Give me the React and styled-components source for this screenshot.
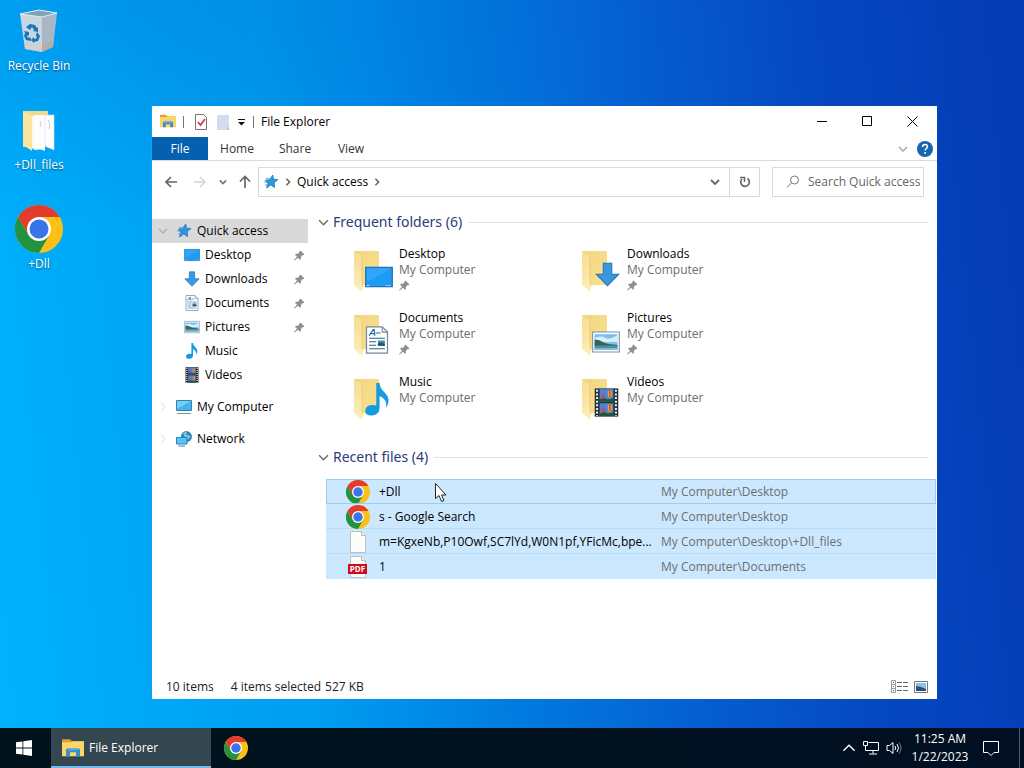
import React from 'react';
import styled, { createGlobalStyle } from 'styled-components';

const GlobalStyle = createGlobalStyle`
  * {
    box-sizing: border-box;
  }
  body {
    margin: 0;
    font-family: 'Open Sans', 'Noto Sans', sans-serif;
    font-size: 12px;
    line-height: 16px;
    color: #000;
  }
  button,
  input {
    font: inherit;
    color: inherit;
    border: 0;
    background: none;
    padding: 0;
  }
  a {
    color: inherit;
    text-decoration: none;
  }
  svg {
    display: block;
    flex: none;
  }
`;

const Screen = styled.div`
  position: relative;
  display: flex;
  flex-direction: column;
  min-height: 100vh;
  overflow: hidden;
  background:
    radial-gradient(ellipse 50% 30% at 15% 0%, rgba(0, 110, 205, 0.3), transparent),
    linear-gradient(
      84deg,
      #00b2fc 0%,
      #00a8f8 14%,
      #009cf0 30%,
      #007ce0 47%,
      #0562d2 62%,
      #0548c0 80%,
      #043ab4 100%
    );
`;

const DesktopIcons = styled.div`
  flex: 1;
  display: flex;
  flex-direction: column;
  align-items: flex-start;
  padding-top: 7px;
`;

const DesktopIcon = styled.button`
  display: flex;
  flex-direction: column;
  align-items: center;
  gap: 2px;
  width: 78px;
  height: 99px;
  color: #fff;
  line-height: 18px;
  text-shadow: 0 1px 2px rgba(0, 0, 0, 0.5);
`;

const ExplorerWindow = styled.main`
  position: absolute;
  top: 106px;
  right: 87px;
  bottom: 69px;
  left: 151px;
  display: flex;
  flex-direction: column;
  background: #fff;
  border-left: 1px solid #1a9fe0;
`;

const TitleBar = styled.header`
  display: flex;
  align-items: center;
  height: 31px;
  padding: 0 2px 0 8px;
`;

const QuickTools = styled.div`
  display: flex;
  align-items: center;
  gap: 7px;
  padding-right: 7px;
`;

const Divider = styled.span`
  width: 1px;
  height: 12px;
  background: #777;
`;

const WindowTitle = styled.h1`
  flex: 1;
  margin: 0;
  font-size: 12px;
  font-weight: 400;
`;

const CaptionButton = styled.button`
  display: flex;
  align-items: center;
  justify-content: center;
  width: 45px;
  height: 31px;
`;

const Ribbon = styled.nav`
  display: flex;
  align-items: center;
  height: 24px;
  border-bottom: 1px solid #dadbdc;
  padding-right: 4px;
`;

const RibbonTab = styled.button`
  height: 23px;
  width: ${(props) => props.$width || 58}px;
  color: ${(props) => (props.$active ? '#fff' : '#333')};
  background: ${(props) => (props.$active ? '#0560b0' : 'none')};
`;

const Spacer = styled.span`
  flex: 1;
`;

const HelpButton = styled.button`
  margin-left: 9px;
`;

const NavBar = styled.div`
  display: flex;
  align-items: center;
  height: 41px;
  padding-right: 13px;
`;

const HistoryButtons = styled.div`
  display: flex;
  align-items: center;
  justify-content: space-between;
  width: 106px;
  padding: 0 7px 0 13px;
`;

const AddressBar = styled.div`
  flex: 1;
  display: flex;
  align-items: center;
  gap: 5px;
  height: 30px;
  border: 1px solid #d9d9d9;
  padding-left: 4px;
`;

const HistoryDropdown = styled.button`
  padding: 0 4px;
`;

const RefreshButton = styled.button`
  display: flex;
  align-items: center;
  justify-content: center;
  width: 30px;
  height: 28px;
  border-left: 1px solid #d9d9d9;
`;

const SearchBox = styled.label`
  display: flex;
  align-items: center;
  gap: 8px;
  width: 152px;
  height: 30px;
  margin-left: 12px;
  border: 1px solid #d9d9d9;
  padding-left: 13px;
  input {
    flex: 1;
    min-width: 0;
    outline: 0;
  }
  input::placeholder {
    color: #666;
    opacity: 1;
  }
`;

const Body = styled.div`
  flex: 1;
  display: flex;
  min-height: 0;
`;

const Tree = styled.nav`
  width: 156px;
  padding-top: 17px;
`;

const TreeItem = styled.a`
  display: flex;
  align-items: center;
  gap: 5px;
  height: 24px;
  margin-top: ${(props) => (props.$spaced ? 8 : 0)}px;
  padding-left: ${(props) => (props.$child ? 32 : 6)}px;
  padding-right: 3px;
  background: ${(props) => (props.$selected ? '#d9d9d9' : 'none')};
  svg:first-child {
    margin-right: ${(props) => (props.$child ? 0 : 3)}px;
  }
`;

const Content = styled.section`
  flex: 1;
  min-width: 0;
  padding: 9px 1px 0 10px;
`;

const GroupHeader = styled.h2`
  display: flex;
  align-items: center;
  gap: 4px;
  height: 22px;
  margin: 0;
  padding-right: 7px;
  font-family: 'Noto Sans', 'Open Sans', sans-serif;
  font-size: 14px;
  font-weight: 400;
  color: #2c3a7c;
  &:after {
    flex: 1;
    height: 1px;
    margin-left: 2px;
    background: #e2e2e2;
    content: '';
  }
`;

const FolderGrid = styled.div`
  display: grid;
  grid-template-columns: repeat(auto-fill, 228px);
  grid-auto-rows: 64px;
  max-width: 600px;
  padding: 13px 0 8px 33px;
`;

const FolderTile = styled.a`
  display: flex;
  align-items: flex-start;
  gap: 6px;
`;

const FolderText = styled.div`
  display: flex;
  flex-direction: column;
  svg {
    margin-top: 2px;
  }
`;

const Muted = styled.span`
  color: #6d6d6d;
`;

const FileTable = styled.table`
  width: calc(100% - 8px);
  margin: 11px 0 0 8px;
  border-collapse: collapse;
  table-layout: fixed;
  background: #cce8ff;
`;

const FileRow = styled.tr`
  height: 25px;
  outline: ${(props) => (props.$focused ? '1px solid #99cdf0' : 'none')};
  outline-offset: -1px;
  td {
    padding: 0;
    box-shadow: inset 0 -1px #b9dcf5;
  }
  &:last-child td {
    box-shadow: none;
  }
  td:first-child {
    width: 335px;
  }
`;

const FileName = styled.div`
  display: flex;
  align-items: center;
  gap: 9px;
  height: 25px;
  padding-left: 20px;
  white-space: nowrap;
`;

const StatusBar = styled.footer`
  display: flex;
  align-items: center;
  height: 25px;
  padding: 0 9px 0 14px;
  color: #222;
`;

const StatusText = styled.span`
  margin-right: ${(props) => props.$gap || 0}px;
`;

const ViewButton = styled.button`
  margin-left: 6px;
`;

const Taskbar = styled.footer`
  display: flex;
  align-items: center;
  height: 40px;
  color: #fff;
  background: linear-gradient(90deg, #00131c, #010f22);
`;

const StartButton = styled.button`
  display: flex;
  justify-content: center;
  width: 51px;
  padding-right: 3px;
`;

const TaskButton = styled.button`
  display: flex;
  align-items: center;
  gap: 5px;
  width: 160px;
  height: 40px;
  padding-left: 11px;
  background: #34464f;
  box-shadow: inset 0 -2px #76b9ed;
`;

const PinnedApp = styled.button`
  margin-left: 13px;
`;

const Tray = styled.div`
  display: flex;
  align-items: center;
  gap: 7px;
  margin-left: auto;
  height: 40px;
`;

const Clock = styled.time`
  width: 62px;
  line-height: 18px;
  text-align: center;
`;

const ShowDesktop = styled.button`
  width: 5px;
  height: 40px;
  margin-left: 8px;
  border-left: 1px solid #4c5866;
`;

const MousePointer = styled.svg`
  position: absolute;
  left: 434px;
  top: 482px;
`;

const Chevron = ({ dir = 'down', size = 10, color = '#666', width = 1.2 }) => {
  const paths = {
    down: 'M1 3l4 4 4-4',
    right: 'M3 1l4 4-4 4',
    up: 'M1 7l4-4 4 4',
  };
  return (
    <svg width={size} height={size} viewBox="0 0 10 10" aria-hidden="true">
      <path d={paths[dir]} fill="none" stroke={color} strokeWidth={width} />
    </svg>
  );
};

const Chrome = ({ size }) => (
  <svg width={size} height={size} viewBox="0 0 48 48" aria-hidden="true">
    <circle cx="24" cy="24" r="24" fill="#fbc116" />
    <path d="M24 24L13.6 30 3.2 12A24 24 0 0 0 24 48L34.4 30z" fill="#229342" />
    <path d="M3.2 12A24 24 0 0 1 44.8 12H24L13.6 30z" fill="#e33b2e" />
    <circle cx="24" cy="24" r="12" fill="#fff" />
    <circle cx="24" cy="24" r="9.5" fill="#3b73e8" />
  </svg>
);

const Star = () => (
  <svg width="16" height="16" viewBox="0 0 16 16" aria-hidden="true">
    <path
      d="M9.8 1l.6 4.2 4.6.4-3.8 3 .4 5-3.8-2.6L3.6 14l1.400-5L2.2 6.400l4.300-.8z"
      fill="#2f98dd"
      stroke="#1b79b9"
      strokeWidth=".8"
    />
    <path d="M3 4.5h3M1 8h3M2 11h2" stroke="#3c9ad6" strokeWidth=".8" />
  </svg>
);

const Pin = () => (
  <svg width="11" height="11" viewBox="0 0 11 11" aria-hidden="true">
    <path
      d="M6.5.5l4 4-1 .8-.8-.2-1.8 1.8.1 2-1 .8L4 7.7.7 10.5 0 10l3-3.3-2-2 .8-1 2 .1 1.8-1.8-.1-.8z"
      fill="#8c9196"
    />
  </svg>
);

const ExplorerLogo = ({ width = 16 }) => (
  <svg width={width} height={width * 0.88} viewBox="0 0 22 19" aria-hidden="true">
    <path d="M0 1h8l2 2h11v4H0z" fill="#dca22d" />
    <path d="M0 4h9l2-1h11v15H0z" fill="#fbd66b" />
    <path d="M4 18v-7l2-1h10l2 1v7h-4v-4H8v4z" fill="#3c8ec7" />
    <path d="M6 10h10v2H6z" fill="#63b0e2" />
  </svg>
);

// small glyphs, drawn on a 16px grid, shared by the tree and the folder tiles
const glyphs = {
  desktop: (
    <>
      <path d="M.4 2.4h15.2v11.2H.4z" fill="#1d9bf6" stroke="#1565a5" strokeWidth=".6" />
      <path d="M1 3h14L1 11z" fill="#43b0ff" opacity=".5" />
      <path d="M1 12.8h1.5M12 12.8h.8M13.5 12.8h1" stroke="#bce3ff" strokeWidth=".6" />
    </>
  ),
  downloads: (
    <path d="M5.3.8h5.4v7h4.5L8 15.2.8 7.8h4.5z" fill="#3999df" stroke="#2275b8" strokeWidth=".7" />
  ),
  documents: (
    <>
      <path d="M2 .5h9l3 3v12H2z" fill="#fff" stroke="#73889a" strokeWidth=".7" />
      <path d="M11 .5v3h3" fill="none" stroke="#73889a" strokeWidth=".6" />
      <path d="M3.5 5.5l2.4-3.5h.5l.4 3.5M4.6 4.3h2" fill="none" stroke="#1472a8" strokeWidth=".7" />
      <path d="M7.5 4h2.5M3.5 7h9M3.5 9h4M3.5 11h4M3.5 13h9" stroke="#26668e" strokeWidth=".6" />
      <path d="M8.5 8.3h4v3h-4z" fill="#388bb5" />
      <path d="M8.5 10l2-.5 2 .8v1h-4z" fill="#2d4f63" />
    </>
  ),
  pictures: (
    <>
      <path d="M.4 2.3h15.2v11.4H.4z" fill="#fff" stroke="#7290a6" strokeWidth=".6" />
      <path d="M1.5 3.5h13v9h-13z" fill="#7cc0ee" />
      <path d="M1.5 6q3-2 6-.5t7-1.5v4h-13z" fill="#d7effb" />
      <path d="M1.5 6.5q3 .2 5 1.600t8 1.400V10.500H1.5z" fill="#326459" />
      <path d="M1.5 10h13v2.5h-13z" fill="#4d8fab" />
      <path d="M1.5 11.5h13v1h-13z" fill="#8ac4d6" />
    </>
  ),
  music: (
    <path
      d="M7.4 0H9q0 2.4 2.5 4.6Q15 8 12 12.3q1.3-4.2-3-6v6q-.2 3.2-3.4 3.5Q2 16 2 13.5q.3-3 4-2.8l1.4.2z"
      fill="#169be2"
    />
  ),
  videos: (
    <>
      <path d="M1.5.2h13v15.6h-13z" fill="#2c2e36" />
      <path d="M4.2.6h7.6v7H4.2z" fill="#4a83dc" />
      <path d="M4.2 8.4h7.6v7H4.2z" fill="#4a83dc" />
      <path d="M4.2 6.2l2.5-.7 2 .8 3-.6v1.9H4.2zM4.2 14l2.5-.7 2 .8 3-.6v1.9H4.2z" fill="#24562c" />
      <path d="M8.7 1.5h2.3v2.7l-.8 1.2h-.8l-.7-1.2zM8.7 9.3h2.3V12l-.8 1.2h-.8L8.7 12z" fill="#f4a522" />
      <path d="M9.5 1.5h.7V5h-.7zM9.5 9.3h.7v3.5h-.7z" fill="#c83a35" />
      <path d="M4.8 4.3l1.2-1 1.5 1-1.2 1.5zM4.8 12.1l1.2-1 1.5 1-1.2 1.5z" fill="#d7434b" />
      <path d="M2.8 1v14.5M13.2 1v14.5" stroke="#edf2f5" strokeWidth="1.1" strokeDasharray="1.1 .9" />
    </>
  ),
  computer: (
    <>
      <path d="M.5 1.5h15v10H.5z" fill="#42b3ee" stroke="#3781ad" />
      <path d="M1 2h14L1 10z" fill="#8bd7fb" opacity=".7" />
      <path d="M1 14.5h14" stroke="#7396a9" />
    </>
  ),
  network: (
    <>
      <circle cx="10.4" cy="5.6" r="5.5" fill="#2f86b5" />
      <path d="M7 2.5q2-2.5 4-1.5l-1 2.5 4.5 1.5-2 3.5-3-1.5z" fill="#7ac4e0" />
      <path d="M.5 6.5H11V13H.5z" fill="#5cc0f2" stroke="#2b83b7" />
      <path d="M2.5 15H9" stroke="#2b83b7" />
    </>
  ),
};

const Glyph = ({ name }) => (
  <svg width="16" height="16" viewBox="0 0 16 16" aria-hidden="true">
    {glyphs[name]}
  </svg>
);

const overlays = {
  desktop: { x: 14, y: 17, size: 28 },
  downloads: { x: 16, y: 16, size: 25 },
  documents: { x: 12, y: 16, size: 28 },
  pictures: { x: 13, y: 18, size: 28 },
  music: { x: 10, y: 9, size: 33 },
  videos: { x: 13, y: 14, size: 29 },
};

const FolderPicture = ({ name }) => {
  const { x, y, size } = overlays[name];
  return (
    <svg width="42" height="48" viewBox="0 0 42 48" aria-hidden="true">
      <defs>
        <linearGradient id={`flap-${name}`} x2="0" y2="1">
          <stop stopColor="#f5dc90" />
          <stop offset="1" stopColor="#fdeeb8" />
        </linearGradient>
        <linearGradient id={`back-${name}`} x2="1" y2="1">
          <stop stopColor="#f3d583" />
          <stop offset="1" stopColor="#f9e08e" />
        </linearGradient>
      </defs>
      <path d="M3 5h24q1 0 1 1v33H3z" fill={`url(#back-${name})`} />
      <path d="M3 5l8 6v26l1 7-2 1-7-6z" fill={`url(#flap-${name})`} />
      <path d="M11 11v26l1 4" fill="none" stroke="#e5bf63" strokeWidth=".6" />
      <svg x={x} y={y} width={size} height={size} viewBox="0 0 16 16">
        {glyphs[name]}
      </svg>
    </svg>
  );
};

const RecycleBin = () => (
  <svg width="48" height="48" viewBox="0 0 48 48" aria-hidden="true">
    <path d="M5 7l22 3v35l-17-3z" fill="#c9d5df" />
    <path d="M27 10l15-4-4 34-11 5z" fill="#a9b7c4" />
    <path d="M5 7l19-4 18 3-15 4z" fill="#7da3bd" stroke="#e4eff6" />
    <path d="M9 34l18 4v7l-17-3z" fill="#d5cfca" opacity=".7" />
    <path d="M27 38l12-5-1 7-11 5z" fill="#b7a9a0" opacity=".7" />
    <g fill="#1976bd">
      <path d="M11 20l4-3 5 1 2 3 1-1v5l-5-1 1-1-2-3-2 3z" />
      <path d="M22 25l3 4-2 5-4 1v1l-3-3 3-3v2l3-1-1-3z" />
      <path d="M9 24l5 1v4l-1-1-1 2 4 1v3l-5-1-2-4 1-3z" />
    </g>
  </svg>
);

const FilesFolder = () => (
  <svg width="48" height="48" viewBox="0 0 48 48" aria-hidden="true">
    <path d="M8 5h25v36H8z" fill="#f3d98a" />
    <path d="M15 10h14v33l-9 1-5-3z" fill="#fbf8ee" />
    <path d="M19 9h11v36l-11-4z" fill="#fdfdfd" />
    <path d="M30 9h9v35l-7-3-2-3z" fill="#fff" stroke="#d4dde3" strokeWidth=".6" />
    <path d="M25 15q2 2 0 6M33 14q3 4 1 9" fill="none" stroke="#b4c0cc" strokeWidth=".8" />
    <path d="M8 5l9 6v34L8 39z" fill="#fae5a2" />
  </svg>
);

const FilePicture = ({ type }) => {
  if (type === 'chrome') {
    return <Chrome size={24} />;
  }
  return (
    <svg width="24" height="24" viewBox="0 0 24 24" aria-hidden="true">
      <path d="M4.5 1.5h11l4 4v17h-15z" fill="#fcfcfa" stroke="#aeb5b9" strokeWidth=".8" />
      <path d="M15.5 1.5v4h4" fill="#edf0f1" stroke="#aeb5b9" strokeWidth=".8" />
      {type === 'pdf' && (
        <>
          <path d="M2 9h19v10H2z" fill="#d20a20" />
          <text x="11.5" y="17" fill="#fff" fontSize="8" fontWeight="700" textAnchor="middle">
            PDF
          </text>
        </>
      )}
    </svg>
  );
};

const folders = [
  { label: 'Desktop', icon: 'desktop', pinned: true },
  { label: 'Downloads', icon: 'downloads', pinned: true },
  { label: 'Documents', icon: 'documents', pinned: true },
  { label: 'Pictures', icon: 'pictures', pinned: true },
  { label: 'Music', icon: 'music' },
  { label: 'Videos', icon: 'videos' },
];

const files = [
  { name: '+Dll', type: 'chrome', path: 'My Computer\\Desktop' },
  { name: 's - Google Search', type: 'chrome', path: 'My Computer\\Desktop' },
  {
    name: 'm=KgxeNb,P10Owf,SC7lYd,W0N1pf,YFicMc,bpe...',
    type: 'page',
    path: 'My Computer\\Desktop\\+Dll_files',
  },
  { name: '1', type: 'pdf', path: 'My Computer\\Documents' },
];

const Explorer = () => (
  <ExplorerWindow>
    <TitleBar>
      <QuickTools>
        <ExplorerLogo width={16} />
        <Divider />
        <svg width="16" height="18" viewBox="0 0 16 18" aria-hidden="true">
          <path d="M4.5 1.5h8l3 3v12h-11z" fill="#fff" stroke="#7d7074" />
          <path d="M7 9l2.5 3L14 6" fill="none" stroke="#dc3c50" strokeWidth="1.8" />
        </svg>
        <svg width="16" height="18" viewBox="0 0 16 18" aria-hidden="true">
          <path d="M3 2h12v15H3z" fill="#d5dcef" />
          <path d="M12 17l3-4v4z" fill="#b9c4df" />
        </svg>
        <svg width="9" height="8" viewBox="0 0 9 8" aria-hidden="true">
          <path d="M1 1.5h7" stroke="#111" />
          <path d="M1 4h7L4.5 7.5z" fill="#111" />
        </svg>
        <Divider />
      </QuickTools>
      <WindowTitle>File Explorer</WindowTitle>
      <CaptionButton aria-label="Minimize">
        <svg width="11" height="11" viewBox="0 0 11 11">
          <path d="M0 5.5h10" stroke="#000" />
        </svg>
      </CaptionButton>
      <CaptionButton aria-label="Maximize">
        <svg width="11" height="11" viewBox="0 0 11 11">
          <path d="M.5.5h9v9h-9z" fill="none" stroke="#000" />
        </svg>
      </CaptionButton>
      <CaptionButton aria-label="Close">
        <svg width="11" height="11" viewBox="0 0 11 11">
          <path d="M.5.5l10 10M10.5.5l-10 10" stroke="#000" />
        </svg>
      </CaptionButton>
    </TitleBar>
    <Ribbon>
      <RibbonTab $active $width={56}>
        File
      </RibbonTab>
      <RibbonTab>Home</RibbonTab>
      <RibbonTab>Share</RibbonTab>
      <RibbonTab $width={54}>View</RibbonTab>
      <Spacer />
      <Chevron color="#aaa" width={1.5} />
      <HelpButton aria-label="Help">
        <svg width="16" height="16" viewBox="0 0 16 16">
          <circle cx="8" cy="8" r="8" fill="#1565b0" />
          <path
            d="M5.6 6q0-2.4 2.4-2.4t2.4 2.2Q10.4 7 9 7.8 8.1 8.3 8.1 9.5"
            fill="none"
            stroke="#fff"
            strokeWidth="1.5"
          />
          <circle cx="8.1" cy="12" r="1" fill="#fff" />
        </svg>
      </HelpButton>
    </Ribbon>
    <NavBar>
      <HistoryButtons>
        <button aria-label="Back">
          <svg width="13" height="12" viewBox="0 0 13 12">
            <path d="M12 6H1M6 1L1 6l5 5" fill="none" stroke="#666" strokeWidth="1.7" />
          </svg>
        </button>
        <button aria-label="Forward">
          <svg width="16" height="12" viewBox="0 0 16 12">
            <path d="M4 6h11M10 1l5 5-5 5" fill="none" stroke="#d3d3d3" strokeWidth="1.5" />
          </svg>
        </button>
        <button aria-label="Recent locations">
          <Chevron size={8} color="#777" width={2} />
        </button>
        <button aria-label="Up">
          <svg width="12" height="13" viewBox="0 0 12 13">
            <path d="M6 13V1.5M1 6.5l5-5 5 5" fill="none" stroke="#666" strokeWidth="1.7" />
          </svg>
        </button>
      </HistoryButtons>
      <AddressBar>
        <Star />
        <Chevron dir="right" size={8} color="#666" width={2} />
        <span>Quick access</span>
        <Chevron dir="right" size={8} color="#666" width={2} />
        <Spacer />
        <HistoryDropdown aria-label="Previous locations">
          <Chevron color="#666" width={1.8} />
        </HistoryDropdown>
        <RefreshButton aria-label="Refresh">
          <svg width="12" height="12" viewBox="0 0 12 12">
            <path d="M8.5 2.5A4.3 4.3 0 1 1 3 3" fill="none" stroke="#666" strokeWidth="1.7" />
            <path d="M1 1.5h4.5V6" fill="none" stroke="#666" strokeWidth="1.5" />
          </svg>
        </RefreshButton>
      </AddressBar>
      <SearchBox>
        <svg width="14" height="14" viewBox="0 0 14 14" aria-hidden="true">
          <circle cx="8.5" cy="5" r="4" fill="none" stroke="#777" />
          <path d="M5.5 8L1 12.5" stroke="#777" />
        </svg>
        <input aria-label="Search Quick access" placeholder="Search Quick access" />
      </SearchBox>
    </NavBar>
    <Body>
      <Tree>
        <TreeItem href="#quick" $selected>
          <Chevron color="#aaa" />
          <Star />
          Quick access
        </TreeItem>
        {folders.map((item) => (
          <TreeItem href={`#${item.icon}`} key={item.icon} $child>
            <Glyph name={item.icon} />
            {item.label}
            <Spacer />
            {item.pinned && <Pin />}
          </TreeItem>
        ))}
        <TreeItem href="#computer" $spaced>
          <Chevron dir="right" color="#e8e8e8" />
          <Glyph name="computer" />
          My Computer
        </TreeItem>
        <TreeItem href="#network" $spaced>
          <Chevron dir="right" color="#e8e8e8" />
          <Glyph name="network" />
          Network
        </TreeItem>
      </Tree>
      <Content>
        <GroupHeader>
          <Chevron size={11} />
          Frequent folders (6)
        </GroupHeader>
        <FolderGrid>
          {folders.map((folder) => (
            <FolderTile href={`#${folder.icon}`} key={folder.icon}>
              <FolderPicture name={folder.icon} />
              <FolderText>
                <span>{folder.label}</span>
                <Muted>My Computer</Muted>
                {folder.pinned && <Pin />}
              </FolderText>
            </FolderTile>
          ))}
        </FolderGrid>
        <GroupHeader>
          <Chevron size={11} />
          Recent files (4)
        </GroupHeader>
        <FileTable>
          <tbody>
            {files.map((file, idx) => (
              <FileRow key={file.name} $focused={idx === 0}>
                <td>
                  <FileName>
                    <FilePicture type={file.type} />
                    <span>{file.name}</span>
                  </FileName>
                </td>
                <td>
                  <Muted>{file.path}</Muted>
                </td>
              </FileRow>
            ))}
          </tbody>
        </FileTable>
      </Content>
    </Body>
    <StatusBar>
      <StatusText $gap={17}>10 items</StatusText>
      <StatusText $gap={4}>4 items selected</StatusText>
      <StatusText>527 KB</StatusText>
      <Spacer />
      <ViewButton aria-label="Details view">
        <svg width="17" height="13" viewBox="0 0 17 13">
          <path d="M.5.5h4v12h-4zM.5 4.5h4M.5 8.5h4" fill="none" stroke="#999" />
          <path d="M2 2.5h1M2 6.5h1M2 10.5h1" stroke="#555" />
          <path d="M6 2.5h11M6 6.5h11M6 10.5h11" stroke="#666" strokeDasharray="5 1" />
        </svg>
      </ViewButton>
      <ViewButton aria-label="Large icons view">
        <svg width="14" height="12" viewBox="0 0 14 12">
          <path d="M.5.5h13v11H.5z" fill="#fff" stroke="#777" />
          <path d="M2 2h10v8H2z" fill="#8fbfe9" />
          <path d="M2 5l5 1 5 2v2H2z" fill="#28517c" />
        </svg>
      </ViewButton>
    </StatusBar>
  </ExplorerWindow>
);

export default function App() {
  return (
    <Screen>
      <GlobalStyle />
      <DesktopIcons>
        <DesktopIcon>
          <RecycleBin />
          Recycle Bin
        </DesktopIcon>
        <DesktopIcon>
          <FilesFolder />
          +Dll_files
        </DesktopIcon>
        <DesktopIcon>
          <Chrome size={48} />
          +Dll
        </DesktopIcon>
      </DesktopIcons>
      <Explorer />
      <Taskbar>
        <StartButton aria-label="Start">
          <svg width="16" height="16" viewBox="0 0 16 16">
            <path
              d="M0 2.3L6.5 1.4v6.2H0zM7.3 1.3L16 0v7.6H7.3zM0 8.4h6.5v6.2L0 13.7zM7.3 8.4H16V16l-8.7-1.3z"
              fill="#fff"
            />
          </svg>
        </StartButton>
        <TaskButton>
          <ExplorerLogo width={22} />
          File Explorer
        </TaskButton>
        <PinnedApp aria-label="Chrome">
          <Chrome size={24} />
        </PinnedApp>
        <Tray>
          <Chevron dir="up" size={14} color="#fff" width={1} />
          <svg width="16" height="14" viewBox="0 0 16 14" aria-hidden="true">
            <path d="M5.5 1.5h10v8h-11M10 9.5v3M6 13h8" fill="none" stroke="#fff" />
            <path d="M.5.5h4v4h-4zM2.5 4.5v5H5" fill="none" stroke="#fff" />
          </svg>
          <svg width="16" height="14" viewBox="0 0 16 14" aria-hidden="true">
            <path d="M1 4.5h2.5L7 1.5v11L3.5 9.5H1z" fill="none" stroke="#fff" />
            <path d="M9 5q1.5 2 0 4M11 3q3 4 0 8" fill="none" stroke="#fff" />
            <path d="M13 1.5q4 5.5 0 11" fill="none" stroke="#718091" />
          </svg>
          <Clock>
            11:25 AM
            <br />
            1/22/2023
          </Clock>
          <svg width="26" height="18" viewBox="0 0 26 18" aria-hidden="true">
            <path d="M5.5 2.5h15v11h-4.5l-3 3-3-3H5.5z" fill="none" stroke="#fff" />
          </svg>
          <ShowDesktop aria-label="Show desktop" />
        </Tray>
      </Taskbar>
      <MousePointer width="14" height="21" viewBox="0 0 14 21" aria-hidden="true">
        <path d="M1.5 1.5v15l3.5-3 2.5 6 2.5-1-2.5-5.5H12z" fill="#fff" stroke="#222" />
      </MousePointer>
    </Screen>
  );
}
